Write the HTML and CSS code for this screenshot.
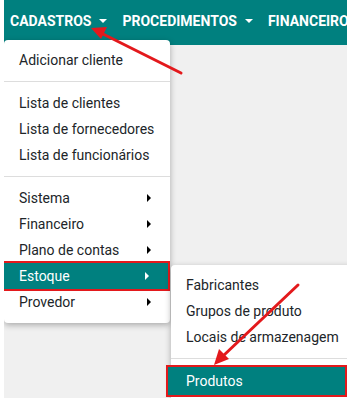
FILE: index.html
```html
<!DOCTYPE html>
<html lang="pt-BR">
<head>
    <meta charset="UTF-8">
    <title>Cadastros</title>
    <link rel="stylesheet" href="styles.css">
</head>
<body>
<div class="page">
    <nav class="navbar">
        <a class="nav-link dropdown-toggle">CADASTROS</a>
        <a class="nav-link dropdown-toggle">PROCEDIMENTOS</a>
        <a class="nav-link">FINANCEIRO</a>
    </nav>

    <ul class="dropdown-menu main-menu">
        <li class="dropdown-item">Adicionar cliente</li>
        <li class="dropdown-divider"></li>
        <li class="dropdown-item">Lista de clientes</li>
        <li class="dropdown-item">Lista de fornecedores</li>
        <li class="dropdown-item">Lista de funcionários</li>
        <li class="dropdown-divider"></li>
        <li class="dropdown-item submenu">Sistema</li>
        <li class="dropdown-item submenu">Financeiro</li>
        <li class="dropdown-item submenu">Plano de contas</li>
        <li class="dropdown-item submenu active marked">Estoque</li>
        <li class="dropdown-item submenu">Provedor</li>
    </ul>

    <ul class="dropdown-menu sub-menu">
        <li class="dropdown-item">Fabricantes</li>
        <li class="dropdown-item">Grupos de produto</li>
        <li class="dropdown-item">Locais de armazenagem</li>
        <li class="dropdown-divider"></li>
        <li class="dropdown-item active marked">Produtos</li>
    </ul>

    <!-- setas de anotação -->
    <svg class="arrows" width="343" height="398" viewBox="0 0 343 398">
        <g stroke="#e3191c" stroke-width="3" fill="#e3191c" stroke-linecap="round">
            <line x1="177" y1="73" x2="97" y2="33"></line>
            <polygon stroke="none" points="87,28 103,27 97,39"></polygon>
            <line x1="294" y1="285" x2="219" y2="356"></line>
            <polygon stroke="none" points="210,365 215,349 225,359"></polygon>
        </g>
    </svg>
</div>
</body>
</html>
```

FILE: styles.css
```css
html, body {
    margin: 0;
    padding: 0;
    background-color: #fff;
}

body {
    font-family: Roboto, "Liberation Sans", sans-serif;
    color: #212529;
}

.page {
    margin-left: 4px;
    height: 398px;
    background-color: #f0f0f0;
    position: relative;
    overflow: hidden;
}

.navbar {
    height: 45px;
    background-color: #00807f;
    display: flex;
    align-items: center;
    gap: 15px;
    padding: 0 0 4px 6px;
    box-sizing: border-box;
    white-space: nowrap;
}

.nav-link {
    color: #fff;
    font-weight: bold;
    font-size: 14px;
    display: flex;
    align-items: center;
    gap: 8px;
}

.dropdown-toggle::after {
    content: "";
    border-top: 4px solid #fff;
    border-left: 4px solid transparent;
    border-right: 4px solid transparent;
}

.dropdown-menu {
    position: absolute;
    list-style: none;
    margin: 0;
    padding: 7px 0;
    background-color: #fff;
    border-radius: 4px;
    box-shadow: 0 2px 6px rgba(0, 0, 0, .3);
    font-size: 14px;
}

.main-menu {
    left: 0;
    top: 40px;
    width: 166px;
    padding-bottom: 8px;
}

.sub-menu {
    left: 167px;
    top: 265px;
    width: 190px;
}

.dropdown-item {
    height: 26px;
    line-height: 26px;
    padding: 0 15px;
    display: flex;
    justify-content: space-between;
    align-items: center;
    white-space: nowrap;
}

.dropdown-item.submenu::after {
    content: "";
    margin-right: 4px;
    border-left: 4px solid #000;
    border-top: 4px solid transparent;
    border-bottom: 4px solid transparent;
}

.dropdown-item.active {
    background-color: #00807f;
    color: #fff;
}

.dropdown-item.active.submenu::after {
    border-left-color: #fff;
}

.main-menu .marked {
    margin-right: 2px;
}

.marked {
    outline: 2px solid #e3191c;
    outline-offset: 0;
    position: relative;
}

.sub-menu .marked {
    height: 28px;
    margin: 0 16px 0 -3px;
    padding-left: 18px;
}

.dropdown-divider {
    height: 1px;
    margin: 8px 0;
    background-color: #ddd;
}

.arrows {
    position: absolute;
    left: 0;
    top: 0;
}
```
